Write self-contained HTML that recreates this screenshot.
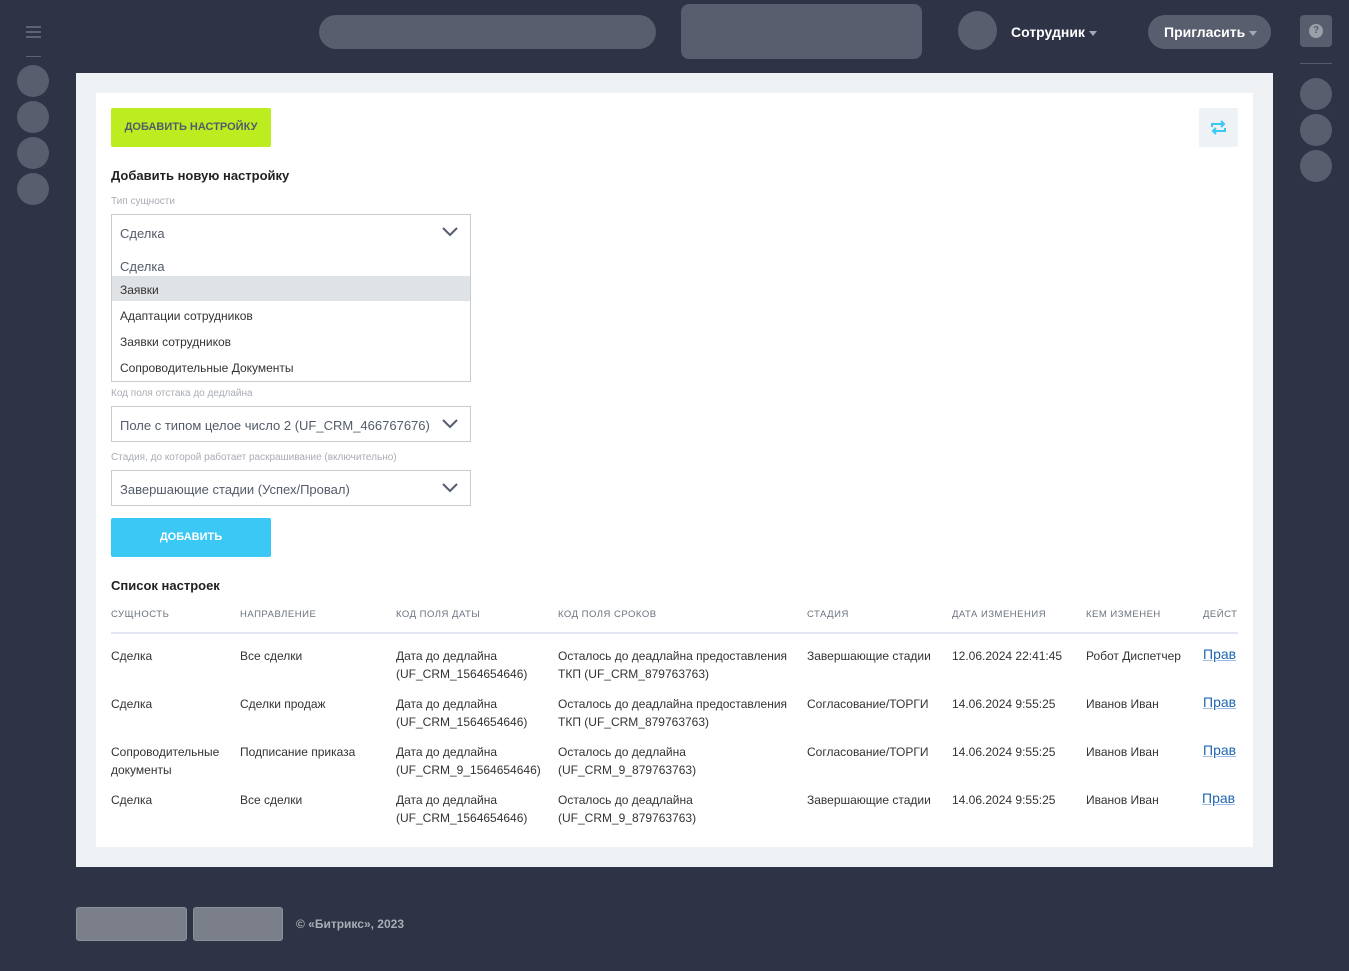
<!DOCTYPE html><html><head><meta charset="utf-8"><style>
*{margin:0;padding:0;box-sizing:border-box}
body{width:1349px;height:971px;background:#2e3346;font-family:"Liberation Sans","DejaVu Sans",sans-serif;position:relative;overflow:hidden;color:#333}
.a{position:absolute}
.c{border-radius:50%;background:#585e6d}
.sel{position:absolute;left:111px;width:360px;height:36px;border:1px solid #c6cdd3;background:#fff;font-size:13px;color:#535c69;padding:11px 8px}
.chev{position:absolute;right:12px;top:12px}
.lbl{position:absolute;left:111px;font-size:10px;color:#a8adb4}
.t{position:absolute;font-size:12px;color:#333;line-height:18px}
.h{position:absolute;top:609px;font-size:9.5px;color:#6a737f;letter-spacing:.5px}
.lk{position:absolute;left:1203px;font-size:14px;color:#2067b0;text-decoration:underline;text-decoration-color:#9fbde0}
.tri{display:inline-block;width:0;height:0;border-left:4px solid transparent;border-right:4px solid transparent;border-top:5px solid #a4a9b4;vertical-align:middle;margin-left:4px}
</style></head><body>
<div class="a" style="left:26px;top:26px;width:15px;height:2px;background:#5d6372;box-shadow:0 5px #5d6372,0 10px #5d6372"></div>
<div class="a" style="left:26px;top:56px;width:15px;height:1px;background:#5d6372"></div>
<div class="a c" style="left:17px;top:65px;width:32px;height:32px"></div>
<div class="a c" style="left:17px;top:101px;width:32px;height:32px"></div>
<div class="a c" style="left:17px;top:137px;width:32px;height:32px"></div>
<div class="a c" style="left:17px;top:173px;width:32px;height:32px"></div>
<div class="a" style="left:319px;top:15px;width:337px;height:34px;border-radius:17px;background:#585e6d"></div>
<div class="a" style="left:681px;top:4px;width:241px;height:55px;border-radius:8px;background:#585e6d"></div>
<div class="a c" style="left:958px;top:11px;width:39px;height:39px"></div>
<div class="a" style="left:1011px;top:24px;font-size:14px;font-weight:bold;color:#fff">Сотрудник<span class="tri"></span></div>
<div class="a" style="left:1148px;top:15px;width:123px;height:34px;border-radius:17px;background:#585e6d;color:#fff;font-size:14px;font-weight:bold;padding:9px 0 0 16px">Пригласить<span class="tri"></span></div>
<div class="a" style="left:1300px;top:15px;width:32px;height:32px;border-radius:4px;background:#585e6d"><div style="margin:9px;width:14px;height:14px;border-radius:50%;background:#9aa0aa;color:#585e6d;font-size:10px;font-weight:bold;text-align:center;line-height:14px">?</div></div>
<div class="a" style="left:1300px;top:63px;width:32px;height:1px;background:#555b6a"></div>
<div class="a c" style="left:1300px;top:78px;width:32px;height:32px"></div>
<div class="a c" style="left:1300px;top:114px;width:32px;height:32px"></div>
<div class="a c" style="left:1300px;top:150px;width:32px;height:32px"></div>

<div class="a" style="left:76px;top:73px;width:1197px;height:794px;background:#eef2f4"></div>
<div class="a" style="left:96px;top:93px;width:1157px;height:754px;background:#ffffff"></div>
<div class="a" style="left:111px;top:108px;width:160px;height:39px;background:#bbed21;border-radius:2px;font-size:11px;font-weight:bold;color:#535c69;text-align:center;line-height:39px">ДОБАВИТЬ НАСТРОЙКУ</div>
<div class="a" style="left:1199px;top:108px;width:39px;height:39px;background:#eef2f4;border-radius:2px"><svg width="39" height="39" viewBox="0 0 39 39" fill="none" stroke="#3bc8f5" stroke-width="2"><path d="M13 19v-3h12M22 13l3 3-3 3M26 20v3H14M17 20l-3 3 3 3"/></svg></div>
<div class="a" style="left:111px;top:168px;font-size:13px;font-weight:bold;color:#222">Добавить новую настройку</div>
<div class="lbl" style="top:196px">Тип сущности</div>
<div class="sel" style="top:214px">Сделка<svg class="chev" width="16" height="10"><path d="M1 1l7 7 7-7" stroke="#535c69" stroke-width="2" fill="none"/></svg></div>
<div class="a" style="left:111px;top:249px;width:360px;height:133px;border:1px solid #c6cdd3;border-top:none;background:#fff;font-size:12px;color:#333">
<div style="padding:10px 8px 0;height:27px;font-size:13px;color:#535c69">Сделка</div>
<div style="background:#dfe3e6;height:25px;padding:7px 8px">Заявки</div>
<div style="height:26px;padding:8px 8px">Адаптации сотрудников</div>
<div style="height:26px;padding:8px 8px">Заявки сотрудников</div>
<div style="height:26px;padding:8px 8px">Сопроводительные Документы</div>
</div>
<div class="lbl" style="top:388px">Код поля отстака до дедлайна</div>
<div class="sel" style="top:406px">Поле с типом целое число 2 (UF_CRM_466767676)<svg class="chev" width="16" height="10"><path d="M1 1l7 7 7-7" stroke="#535c69" stroke-width="2" fill="none"/></svg></div>
<div class="lbl" style="top:452px">Стадия, до которой работает раскрашивание (включительно)</div>
<div class="sel" style="top:470px">Завершающие стадии (Успех/Провал)<svg class="chev" width="16" height="10"><path d="M1 1l7 7 7-7" stroke="#535c69" stroke-width="2" fill="none"/></svg></div>
<div class="a" style="left:111px;top:518px;width:160px;height:39px;background:#3bc8f5;border-radius:2px;font-size:11px;font-weight:bold;color:#fff;text-align:center;line-height:39px">ДОБАВИТЬ</div>
<div class="a" style="left:111px;top:578px;font-size:13px;font-weight:bold;color:#222">Список настроек</div>
<div class="h" style="left:111px">СУЩНОСТЬ</div><div class="h" style="left:240px">НАПРАВЛЕНИЕ</div><div class="h" style="left:396px">КОД ПОЛЯ ДАТЫ</div><div class="h" style="left:558px">КОД ПОЛЯ СРОКОВ</div><div class="h" style="left:807px">СТАДИЯ</div><div class="h" style="left:952px">ДАТА ИЗМЕНЕНИЯ</div><div class="h" style="left:1086px">КЕМ ИЗМЕНЕН</div><div class="h" style="left:1203px;width:35px;overflow:hidden;white-space:nowrap">ДЕЙСТВИЯ</div>
<div class="a" style="left:111px;top:632px;width:1127px;height:2px;background:#e4e6f7"></div>

<div class="t" style="left:111px;top:647px">Сделка</div><div class="t" style="left:240px;top:647px">Все сделки</div><div class="t" style="left:396px;top:647px">Дата до дедлайна<br>(UF_CRM_1564654646)</div><div class="t" style="left:558px;top:647px">Осталось до деадлайна предоставления<br>ТКП (UF_CRM_879763763)</div><div class="t" style="left:807px;top:647px">Завершающие стадии</div><div class="t" style="left:952px;top:647px">12.06.2024 22:41:45</div><div class="t" style="left:1086px;top:647px">Робот Диспетчер</div><div class="lk" style="top:646px">Прав</div>
<div class="t" style="left:111px;top:695px">Сделка</div><div class="t" style="left:240px;top:695px">Сделки продаж</div><div class="t" style="left:396px;top:695px">Дата до дедлайна<br>(UF_CRM_1564654646)</div><div class="t" style="left:558px;top:695px">Осталось до деадлайна предоставления<br>ТКП (UF_CRM_879763763)</div><div class="t" style="left:807px;top:695px">Согласование/ТОРГИ</div><div class="t" style="left:952px;top:695px">14.06.2024 9:55:25</div><div class="t" style="left:1086px;top:695px">Иванов Иван</div><div class="lk" style="top:694px">Прав</div>
<div class="t" style="left:111px;top:743px">Сопроводительные<br>документы</div><div class="t" style="left:240px;top:743px">Подписание приказа</div><div class="t" style="left:396px;top:743px">Дата до дедлайна<br>(UF_CRM_9_1564654646)</div><div class="t" style="left:558px;top:743px">Осталось до дедлайна<br>(UF_CRM_9_879763763)</div><div class="t" style="left:807px;top:743px">Согласование/ТОРГИ</div><div class="t" style="left:952px;top:743px">14.06.2024 9:55:25</div><div class="t" style="left:1086px;top:743px">Иванов Иван</div><div class="lk" style="top:742px">Прав</div>
<div class="t" style="left:111px;top:791px">Сделка</div><div class="t" style="left:240px;top:791px">Все сделки</div><div class="t" style="left:396px;top:791px">Дата до дедлайна<br>(UF_CRM_1564654646)</div><div class="t" style="left:558px;top:791px">Осталось до деадлайна<br>(UF_CRM_9_879763763)</div><div class="t" style="left:807px;top:791px">Завершающие стадии</div><div class="t" style="left:952px;top:791px">14.06.2024 9:55:25</div><div class="t" style="left:1086px;top:791px">Иванов Иван</div><div class="lk" style="top:790px;left:1202px">Прав</div>

<div class="a" style="left:76px;top:907px;width:111px;height:34px;border-radius:3px;background:#7a7f8a;border:1px solid #8a8f99"></div>
<div class="a" style="left:193px;top:907px;width:90px;height:34px;border-radius:3px;background:#7a7f8a;border:1px solid #8a8f99"></div>
<div class="a" style="left:296px;top:917px;font-size:12px;font-weight:bold;color:#a9adb5">© «Битрикс», 2023</div>
</body></html>
